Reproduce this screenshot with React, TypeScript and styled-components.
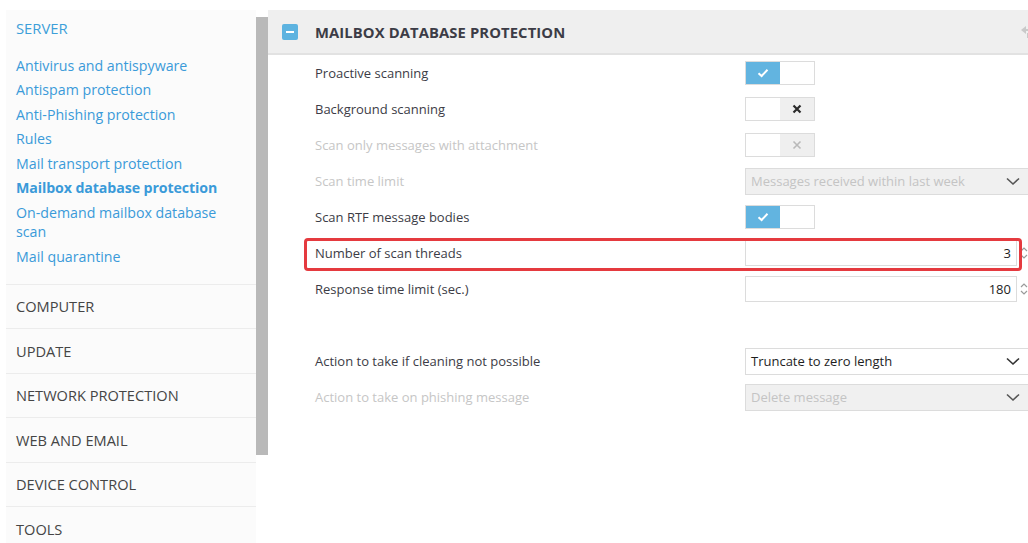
import React from "react";
import styled, { createGlobalStyle } from "styled-components";

const GlobalStyle = createGlobalStyle`
  html, body {
    margin: 0;
    padding: 0;
    background: #fff;
    overflow: hidden;
  }
  body {
    font-family: "Open Sans", "Noto Sans", sans-serif;
  }
`;

type Row =
  | { kind: "toggle"; label: string; on: boolean; disabled?: boolean }
  | { kind: "select"; label: string; value: string; disabled?: boolean }
  | { kind: "number"; label: string; value: number; marked?: boolean }
  | { kind: "blank" };

const serverLinks = [
  { text: "Antivirus and antispyware" },
  { text: "Antispam protection" },
  { text: "Anti-Phishing protection" },
  { text: "Rules" },
  { text: "Mail transport protection" },
  { text: "Mailbox database protection", active: true },
  { text: "On-demand mailbox database scan" },
  { text: "Mail quarantine" },
];

const sections = [
  "COMPUTER",
  "UPDATE",
  "NETWORK PROTECTION",
  "WEB AND EMAIL",
  "DEVICE CONTROL",
  "TOOLS",
];

const rows: Row[] = [
  { kind: "toggle", label: "Proactive scanning", on: true },
  { kind: "toggle", label: "Background scanning", on: false },
  { kind: "toggle", label: "Scan only messages with attachment", on: false, disabled: true },
  { kind: "select", label: "Scan time limit", value: "Messages received within last week", disabled: true },
  { kind: "toggle", label: "Scan RTF message bodies", on: true },
  { kind: "number", label: "Number of scan threads", value: 3, marked: true },
  { kind: "number", label: "Response time limit (sec.)", value: 180 },
  { kind: "blank" },
  { kind: "select", label: "Action to take if cleaning not possible", value: "Truncate to zero length" },
  { kind: "select", label: "Action to take on phishing message", value: "Delete message", disabled: true },
];

export default function App() {
  return (
    <>
      <GlobalStyle />
      <Page>
        <Sidebar>
          <ServerBlock>
            <ServerTitle>SERVER</ServerTitle>
            <LinkList>
              {serverLinks.map((l) => (
                <NavLink key={l.text} active={!!l.active}>
                  {l.text}
                </NavLink>
              ))}
            </LinkList>
          </ServerBlock>
          {sections.map((s) => (
            <Section key={s}>{s}</Section>
          ))}
        </Sidebar>
        <ScrollTrack>
          <ScrollThumb />
        </ScrollTrack>
        <Main>
          <Header>
            <CollapseBox>
              <span />
            </CollapseBox>
            <HeaderTitle>MAILBOX DATABASE PROTECTION</HeaderTitle>
            <HeaderIcon viewBox="0 0 12 14" width="12" height="14">
              <path d="M7 1 L2 5 L7 9 Z" fill="#c9c9c9" />
              <rect x="6" y="4" width="5" height="2" fill="#c9c9c9" />
              <rect x="8" y="8" width="3" height="5" fill="#c9c9c9" />
            </HeaderIcon>
          </Header>
          <Rows>
            {rows.map((r, i) => (
              <SettingRow key={i} marked={r.kind === "number" && !!r.marked}>
                {r.kind !== "blank" && (
                  <>
                    <Label disabled={"disabled" in r && !!r.disabled}>
                      {r.label}
                    </Label>
                    <Control>{renderControl(r)}</Control>
                  </>
                )}
              </SettingRow>
            ))}
          </Rows>
        </Main>
      </Page>
    </>
  );
}

function renderControl(r: Row) {
  if (r.kind === "toggle") {
    return (
      <Toggle>
        <ToggleHalf tone={r.on ? "on" : "blank"}>
          {r.on && (
            <svg width="12" height="10" viewBox="0 0 12 10">
              <path
                d="M1.5 5.2 L4.6 8 L10.5 1.8"
                fill="none"
                stroke="#fff"
                strokeWidth="2"
              />
            </svg>
          )}
        </ToggleHalf>
        <ToggleHalf tone={r.on ? "blank" : "off"}>
          {!r.on && (
            <svg width="10" height="10" viewBox="0 0 10 10">
              <path
                d="M1.5 1.5 L8.5 8.5 M8.5 1.5 L1.5 8.5"
                stroke={r.disabled ? "#b9b9b9" : "#2b2b2b"}
                strokeWidth={r.disabled ? 1.6 : 2.2}
              />
            </svg>
          )}
        </ToggleHalf>
      </Toggle>
    );
  }
  if (r.kind === "select") {
    return (
      <Select disabled={!!r.disabled}>
        <span>{r.value}</span>
        <svg width="14" height="9" viewBox="0 0 14 9">
          <path d="M1 1.5 L7 7 L13 1.5" fill="none" stroke="#333" strokeWidth="1.6" />
        </svg>
      </Select>
    );
  }
  if (r.kind === "number") {
    return (
      <NumberWrap>
        <NumberBox>{r.value}</NumberBox>
        <Spinner viewBox="0 0 8 14" width="8" height="14">
          <path d="M1 5 L4 2 L7 5" fill="none" stroke="#9a9a9a" strokeWidth="1.2" />
          <path d="M1 9 L4 12 L7 9" fill="none" stroke="#9a9a9a" strokeWidth="1.2" />
        </Spinner>
      </NumberWrap>
    );
  }
  return null;
}

const Page = styled.div`
  display: flex;
  align-items: flex-start;
  width: 1060px;
  height: 543px;
  padding-top: 10px;
  box-sizing: border-box;
`;

const Sidebar = styled.nav`
  width: 250px;
  margin-left: 6px;
  background: #fbfbfb;
  height: 540px;
  display: flex;
  flex-direction: column;
`;

const ServerBlock = styled.div`
  padding: 8px 0 15px 10px;
  border-bottom: 1px solid #ececec;
`;

const ServerTitle = styled.div`
  color: #3d9fd9;
  font-size: 14.8px;
  line-height: 20px;
  margin-bottom: 15px;
`;

const LinkList = styled.div`
  display: flex;
  flex-direction: column;
  width: 228px;
`;

const NavLink = styled.a<{ active: boolean }>`
  color: #3a9ad9;
  font-size: 14.2px;
  line-height: 19.5px;
  padding: 2.5px 0;
  font-weight: ${(p) => (p.active ? 700 : 400)};
  letter-spacing: ${(p) => (p.active ? "-0.1px" : "0")};
  cursor: pointer;
`;

const Section = styled.div`
  height: 43.5px;
  flex-shrink: 0;
  display: flex;
  align-items: center;
  padding-left: 10px;
  color: #454545;
  font-size: 14.6px;
  border-bottom: 1px solid #ececec;
`;

const ScrollTrack = styled.div`
  width: 12px;
  padding-top: 7px;
`;

const ScrollThumb = styled.div`
  height: 438px;
  background: #b9b9b9;
`;

const Main = styled.main`
  flex: 1;
  display: flex;
  flex-direction: column;
`;

const Header = styled.header`
  height: 43px;
  background: #efefef;
  border-bottom: 2px solid #e2e2e2;
  display: flex;
  align-items: center;
  padding-left: 14px;
`;

const CollapseBox = styled.div`
  width: 16px;
  height: 16px;
  border-radius: 2px;
  background: #5db3e0;
  display: flex;
  align-items: center;
  justify-content: center;
  margin-right: 17px;
  span {
    width: 8px;
    height: 2px;
    background: #fff;
  }
`;

const HeaderTitle = styled.h2`
  margin: 0;
  font-size: 14.8px;
  font-weight: 700;
  color: #3c3c46;
  letter-spacing: 0.1px;
`;

const HeaderIcon = styled.svg`
  margin-left: auto;
  margin-right: 29px;
`;

const Rows = styled.div`
  display: flex;
  flex-direction: column;
`;

const SettingRow = styled.div<{ marked: boolean }>`
  height: 36px;
  display: flex;
  align-items: center;
  padding-left: 47px;
  position: relative;
  ${(p) =>
    p.marked &&
    `
    &::after {
      content: "";
      position: absolute;
      left: 36px;
      top: 3px;
      width: 718px;
      height: 33px;
      box-sizing: border-box;
      border: 3px solid #e53a3f;
      border-radius: 4px;
      pointer-events: none;
    }
  `}
`;

const Label = styled.span<{ disabled: boolean }>`
  width: 430px;
  font-size: 13px;
  color: ${(p) => (p.disabled ? "#c6c6c6" : "#3c3c46")};
`;

const Control = styled.div`
  width: 290px;
  display: flex;
  align-items: center;
`;

const Toggle = styled.div`
  display: flex;
  width: 70px;
  height: 24px;
  border: 1px solid #dcdcdc;
  box-sizing: border-box;
  background: #fff;
`;

const ToggleHalf = styled.div<{ tone: "on" | "off" | "blank" }>`
  flex: 1;
  display: flex;
  align-items: center;
  justify-content: center;
  background: ${(p) =>
    p.tone === "on" ? "#62b4e0" : p.tone === "off" ? "#efefef" : "#fff"};
`;

const Select = styled.div<{ disabled: boolean }>`
  width: 100%;
  height: 27px;
  box-sizing: border-box;
  border: 1px solid #dcdcdc;
  background: ${(p) => (p.disabled ? "#f0f0f0" : "#fff")};
  color: ${(p) => (p.disabled ? "#c4c4c4" : "#1e1e1e")};
  display: flex;
  align-items: center;
  justify-content: space-between;
  padding: 0 14px 0 5px;
  font-size: 13px;
  svg path {
    stroke: ${(p) => (p.disabled ? "#555" : "#333")};
  }
`;

const NumberWrap = styled.div`
  display: flex;
  align-items: center;
  width: 100%;
`;

const NumberBox = styled.div`
  width: 272px;
  height: 26px;
  box-sizing: border-box;
  border: 1px solid #dcdcdc;
  background: #fff;
  display: flex;
  align-items: center;
  justify-content: flex-end;
  padding-right: 5px;
  font-size: 13px;
  color: #1e1e1e;
`;

const Spinner = styled.svg`
  margin-left: 3px;
`;
